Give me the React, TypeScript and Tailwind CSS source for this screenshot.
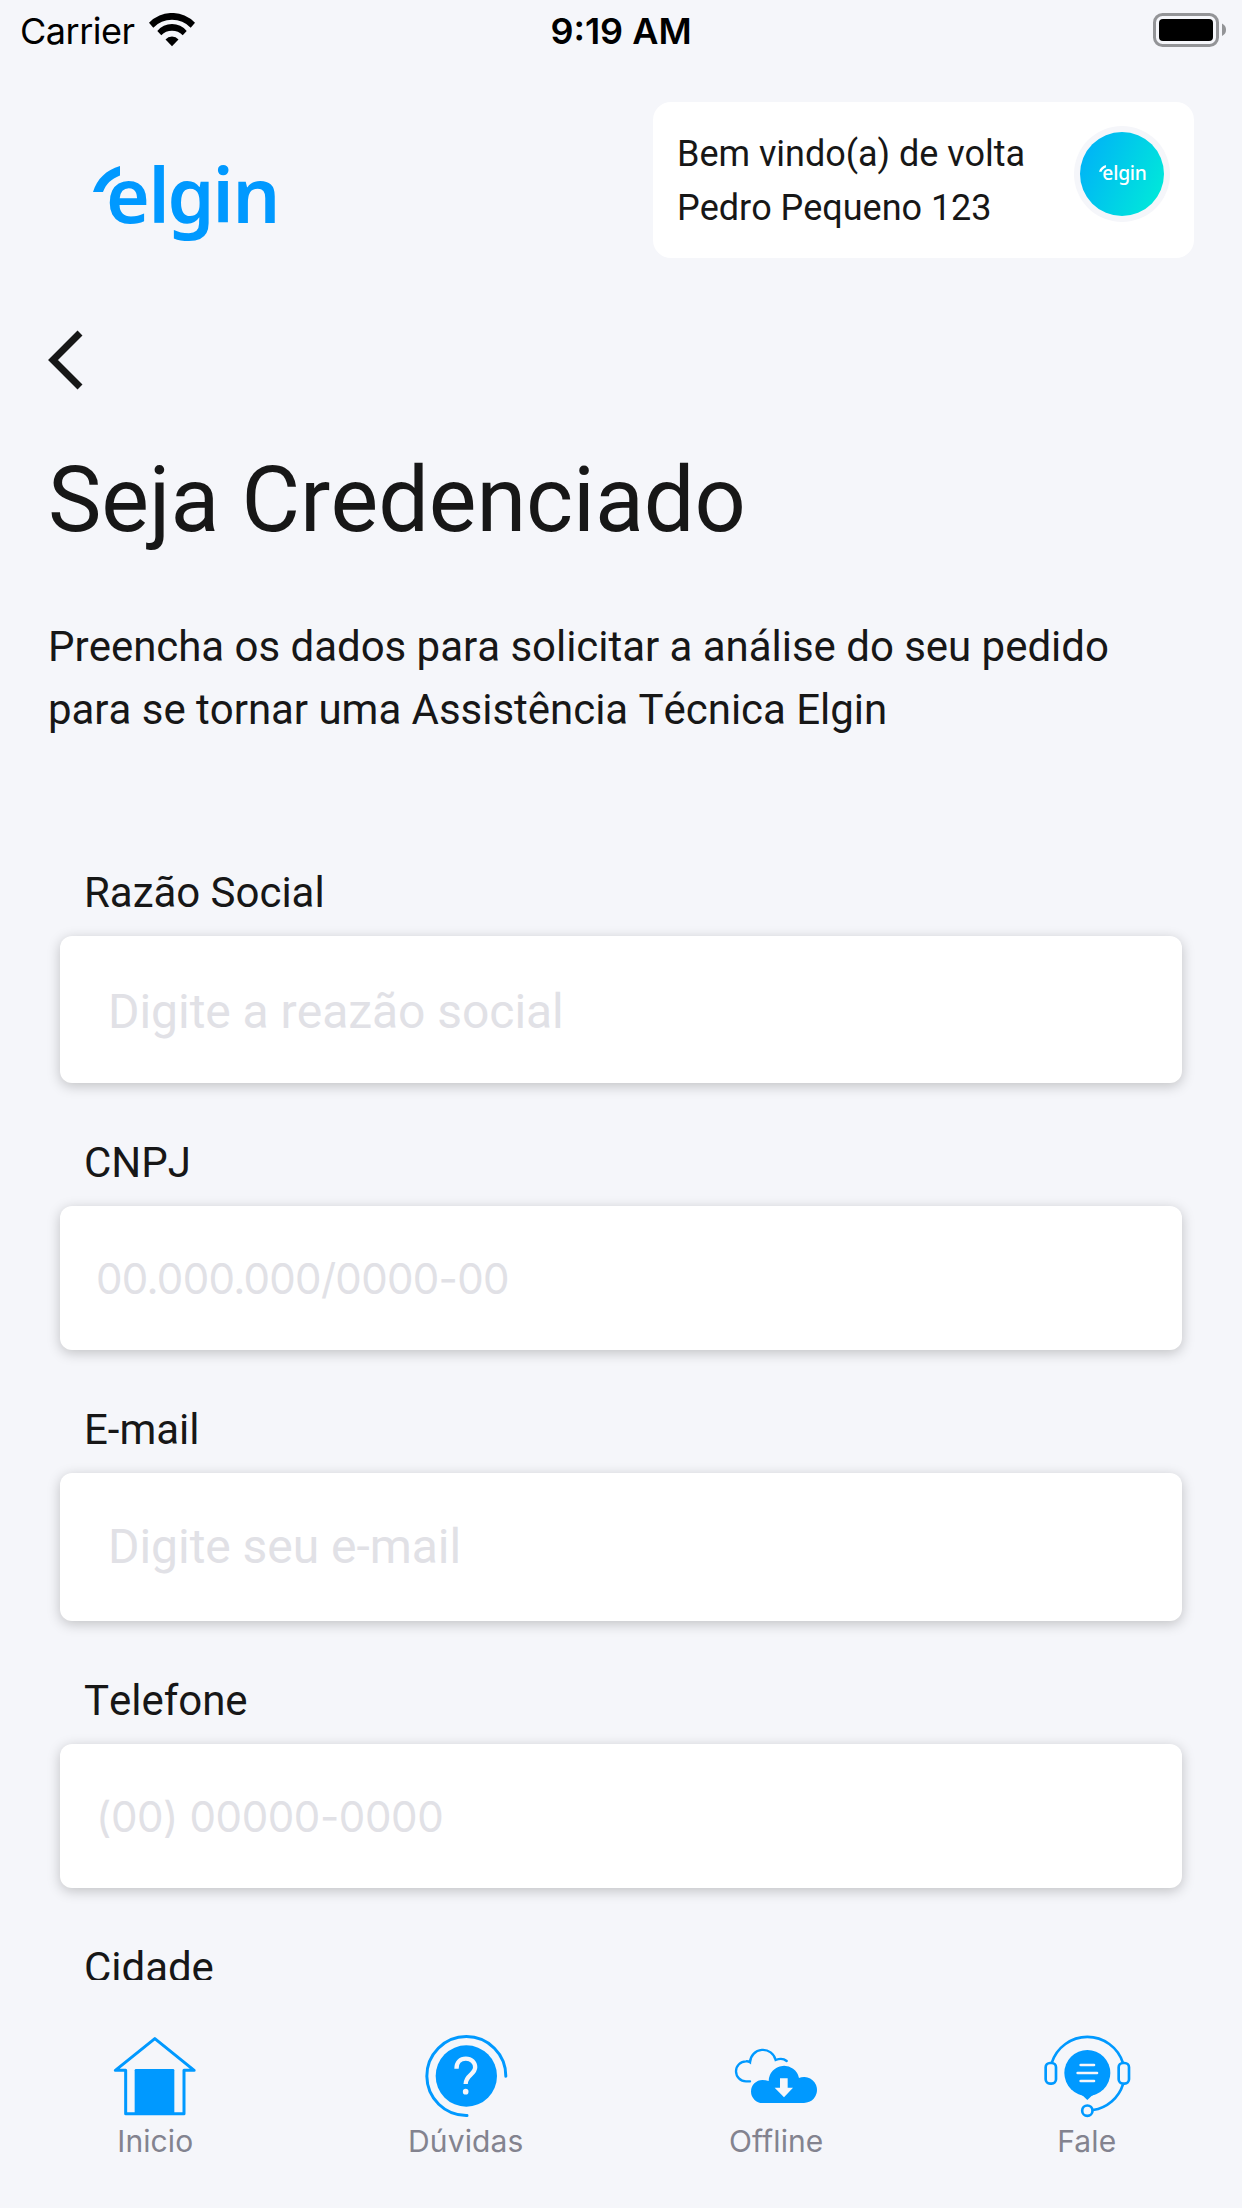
import type { ReactNode } from 'react';

interface Field {
  label: string;
  placeholder: string;
  boxClass: string;
  textClass: string;
}

const plainText = 'text-[48px] tracking-[-0.04px]';
const maskedText = 'font-[Inter,sans-serif] text-[42px] [font-kerning:normal]';

const fields: Field[] = [
  { label: 'Razão Social', placeholder: 'Digite a reazão social', boxClass: 'h-[147px] pt-1 pl-12', textClass: plainText },
  { label: 'CNPJ', placeholder: '00.000.000/0000-00', boxClass: 'h-36 pl-9', textClass: `${maskedText} tracking-[-0.7px]` },
  { label: 'E-mail', placeholder: 'Digite seu e-mail', boxClass: 'h-[148px] pl-12', textClass: plainText },
  { label: 'Telefone', placeholder: '(00) 00000-0000', boxClass: 'h-36 pl-9', textClass: `${maskedText} tracking-[-0.4px]` },
];

function StatusBar() {
  return (
    <div className="flex h-[60px] shrink-0 items-center justify-between pr-[15px] pl-5 font-[Inter,sans-serif] text-[36px] text-black">
      <div className="flex w-[400px] items-center">
        <span className="w-[129px] pt-0.5 tracking-[-0.5px] whitespace-nowrap">Carrier</span>
        <svg width="46" height="34" viewBox="0 0 46 34">
          <path d="M0 9.700A32 32 0 0 1 46 9.700L41.700 14.700A26 26 0 0 0 4.300 14.700Z" />
          <path d="M8.300 18A19 19 0 0 1 37.700 18L33.700 22.300A15 15 0 0 0 12.300 22.300Z" />
          <path d="M16.500 26.500A8.500 8.500 0 0 1 29.500 26.500L23 33.200Z" />
        </svg>
      </div>
      <span className="pt-0.5 font-semibold whitespace-nowrap">9:19 AM</span>
      <div className="flex w-[405px] items-center justify-end">
        <svg width="74" height="34" viewBox="0 0 74 34">
          <rect x="1.5" y="1.5" width="63" height="31" rx="8" fill="none" stroke="#939497" strokeWidth="3" />
          <rect x="6" y="6" width="54" height="22" rx="4" />
          <path d="M69 10.500Q73 12.500 73 16.800T69 23Z" fill="#939497" />
        </svg>
      </div>
    </div>
  );
}

function Logo({ className }: { className: string }) {
  return (
    <svg viewBox="0 0 183 77" className={`overflow-visible ${className}`} fill="currentColor">
      <path d="M0 26C4 13 13 4 27 0V9.500C18 13 13 18 10 26Z" />
      <text x="13 55.500 74.500 119.500 139.500" y="57" fontSize="75" className="font-[Noto_Sans,sans-serif]">
        elgin
      </text>
    </svg>
  );
}

function Header() {
  return (
    <header className="flex items-start justify-between pt-[42px] pr-12 pl-[93px]">
      <Logo className="mt-16 h-[77px] w-[183px] font-semibold text-[#0099ff]" />
      <div className="flex h-[156px] w-[541px] items-start justify-between rounded-[18px] bg-white p-6">
        <p className="pt-px text-[36px] leading-[54px]">
          Bem vindo(a) de volta
          <br />
          Pedro Pequeno 123
        </p>
        <div className="flex size-24 items-center justify-center rounded-full bg-[#f5f6fa]">
          <div className="flex size-[84px] items-center justify-center rounded-full bg-linear-[115deg,#00b4f6_10%,#00e8da_90%]">
            <Logo className="mt-0.5 h-5 w-[47px] font-medium text-white" />
          </div>
        </div>
      </div>
    </header>
  );
}

function FormField({ field }: { field: Field }) {
  return (
    <div>
      <label className="mb-3 block pl-6 text-[42px] leading-[63px]">{field.label}</label>
      <div
        className={`flex items-center rounded-xl bg-white text-[#e1e1e6] shadow-[0_3px_13px_rgba(0,0,0,0.22)] ${field.boxClass}`}
      >
        <span className={field.textClass}>{field.placeholder}</span>
      </div>
    </div>
  );
}

function HomeIcon() {
  return (
    <>
      <path d="M134.500 14L16 109H47V239H222V109H252.500Z" fill="none" stroke="currentColor" strokeWidth="9" strokeLinejoin="round" />
      <rect x="74" y="105" width="119" height="136" rx="4" />
    </>
  );
}

function QuestionIcon() {
  return (
    <>
      <path d="M254.500 127A118.500 118.500 0 1 0 138 244.500" fill="none" stroke="currentColor" strokeWidth="9" strokeLinecap="round" />
      <circle cx="136" cy="126" r="92" />
      <path d="M106.500 104C106.500 85 118 74 134.500 74S162.500 85 162.500 100C162.500 122 134 122 134 150" fill="none" stroke="#f5f6fa" strokeWidth="13" />
      <circle cx="134" cy="173" r="8.5" fill="#f5f6fa" />
    </>
  );
}

function CloudIcon() {
  return (
    <>
      <path d="M57 142H45A30 30 0 0 1 45 82Q51 81 57 85A39 39 0 0 1 134 78Q154 70 167 81" fill="none" stroke="currentColor" strokeWidth="7" strokeLinecap="round" />
      <path d="M94.500 207A34.500 34.500 0 0 1 94.500 138Q104 138 113 141A46 46 0 0 1 204 132A39 39 0 1 1 218 207Z" />
      <path d="M147 133H170V161H186L159 190L131 161H147Z" fill="#f5f6fa" />
    </>
  );
}

function HeadsetIcon() {
  return (
    <>
      <g fill="none" stroke="currentColor" strokeWidth="8">
        <path d="M29.500 86A112 112 0 0 1 242.500 86" />
        <path d="M243 151A112 112 0 0 1 153 228" />
        <rect x="11" y="87" width="31" height="62" rx="13" />
        <rect x="230" y="87" width="31" height="62" rx="13" />
        <circle cx="136" cy="230" r="15.5" />
      </g>
      <circle cx="136" cy="117" r="69" />
      <path d="M108 178Q122 183 136 198Q150 183 164 178Z" />
      <path d="M116 93H156M107 117H165M116 141H156" stroke="#f5f6fa" strokeWidth="8" strokeLinecap="round" />
    </>
  );
}

function NavItem({ label, children }: { label: string; children: ReactNode }) {
  return (
    <div className="flex flex-1 flex-col items-center gap-[5px] pt-[54px]">
      <svg width="90" height="84" viewBox="0 0 270 252" fill="currentColor" className="text-[#0099ff]">
        {children}
      </svg>
      <span className="font-[Inter,sans-serif] text-[30px] leading-9 tracking-[0.1px] text-[#83838f] [font-variant-ligatures:none]">
        {label}
      </span>
    </div>
  );
}

export default function App() {
  return (
    <div className="flex h-[2208px] w-[1242px] flex-col overflow-hidden bg-[#f5f6fa] font-[Roboto,sans-serif] text-[#171717]">
      <StatusBar />
      <main className="min-h-0 flex-1 overflow-hidden tracking-[-0.03px] [font-kerning:none]">
        <Header />
        <div className="px-12">
          <svg width="36" height="60" viewBox="0 0 36 60" className="mt-[72px]">
            <path d="M32 3L5 30L32 57" fill="none" stroke="currentColor" strokeWidth="7" />
          </svg>
          <h1 className="mt-[57px] text-[90px] leading-[108px] tracking-[-0.08px]">Seja Credenciado</h1>
          <p className="mt-[60px] text-[42px] leading-[63px]">
            Preencha os dados para solicitar a análise do seu pedido
            <br />
            para se tornar uma Assistência Técnica Elgin
          </p>
        </div>
        <form className="mt-[120px] flex flex-col gap-12 px-[60px]">
          {fields.map((field) => (
            <FormField key={field.label} field={field} />
          ))}
          <label className="pl-6 text-[42px] leading-[63px]">Cidade</label>
        </form>
      </main>
      <nav className="flex h-[228px] shrink-0">
        <NavItem label="Inicio">
          <HomeIcon />
        </NavItem>
        <NavItem label="Dúvidas">
          <QuestionIcon />
        </NavItem>
        <NavItem label="Offline">
          <CloudIcon />
        </NavItem>
        <NavItem label="Fale">
          <HeadsetIcon />
        </NavItem>
      </nav>
    </div>
  );
}
